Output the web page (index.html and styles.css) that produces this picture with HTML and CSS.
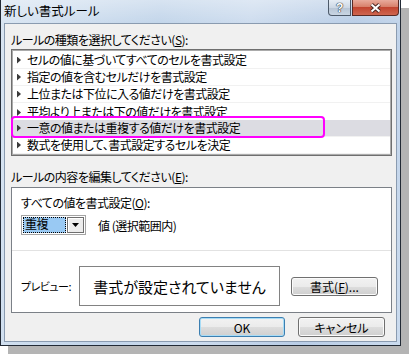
FILE: index.html
```html
<!DOCTYPE html>
<html lang="ja">

<head>
    <meta charset="UTF-8" />
    <title>新しい書式ルール</title>
    <link rel="stylesheet" href="styles.css">
</head>

<body>
    <div class="screen">
        <div class="window">
            <div class="titlebar">
                <span class="title">新しい書式ルール</span>
                <div class="caption-buttons">
                    <div class="cap-btn help">?</div>
                    <div class="cap-btn close">
                        <svg width="13" height="10" viewBox="0 0 13 10">
                            <path d="M2.5 1.5 L10.5 8.5 M10.5 1.5 L2.5 8.5" stroke="#4a2622" stroke-width="4" />
                            <path d="M2.5 1.5 L10.5 8.5 M10.5 1.5 L2.5 8.5" stroke="#fff" stroke-width="2" />
                        </svg>
                    </div>
                </div>
            </div>

            <div class="client">
                <div class="group-label">ルールの種類を選択してください(<u>S</u>):</div>
                <div class="rule-list">
                    <div class="rule">セルの値に基づいてすべてのセルを書式設定</div>
                    <div class="rule">指定の値を含むセルだけを書式設定</div>
                    <div class="rule">上位または下位に入る値だけを書式設定</div>
                    <div class="rule clipped">平均より上または下の値だけを書式設定</div>
                    <div class="rule selected">一意の値または重複する値だけを書式設定</div>
                    <div class="rule">数式を使用して、書式設定するセルを決定</div>
                    <div class="marker"></div>
                </div>

                <div class="group-label second">ルールの内容を編集してください(<u>E</u>):</div>
                <div class="edit-panel">
                    <div class="field-label">すべての値を書式設定(<u>O</u>):</div>
                    <div class="combo-row">
                        <div class="combo">
                            <span class="combo-value">重複</span>
                            <span class="combo-btn"><span class="combo-arrow"></span></span>
                        </div>
                        <span class="combo-note">値 (選択範囲内)</span>
                    </div>
                    <div class="separator"></div>
                    <div class="preview-row">
                        <span class="preview-label">プレビュー:</span>
                        <div class="preview-box">書式が設定されていません</div>
                        <button class="btn format-btn">書式(<u>F</u>)...</button>
                    </div>
                </div>

                <div class="dialog-buttons">
                    <button class="btn default">OK</button>
                    <button class="btn">キャンセル</button>
                </div>
            </div>
        </div>
    </div>
</body>

</html>
```

FILE: styles.css
```css
* {
    box-sizing: border-box;
}

body {
    margin: 0;
    background: #fff;
    font-family: "Noto Sans CJK JP", sans-serif;
    font-size: 12px;
    color: #000;
    font-feature-settings: "palt";
    letter-spacing: -0.5px;
}

.screen {
    width: 410px;
    height: 356px;
    overflow: hidden;
}

/* window frame */

.window {
    width: 401px;
    height: 346px;
    display: flex;
    flex-direction: column;
    border: 1px solid #222a35;
    border-top: none;
    background:
        linear-gradient(to bottom, rgba(255, 255, 255, 0.35), rgba(255, 255, 255, 0) 24px),
        linear-gradient(100deg, #d9e5f2 0%, #c2d5ea 35%, #cddcee 55%, #b9cde6 78%, #cbdbee 100%);
    box-shadow: 8px 8px 0 #b4b4b4;
}

.titlebar {
    height: 23px;
    display: flex;
    justify-content: space-between;
    align-items: flex-start;
}

.title {
    padding: 2px 0 0 3px;
    font-size: 12.5px;
    line-height: 17px;
    letter-spacing: 0;
}

.caption-buttons {
    display: flex;
    gap: 1px;
    margin-right: 1px;
}

.cap-btn {
    height: 16px;
    display: flex;
    align-items: center;
    justify-content: center;
    border: 1px solid #4d5a6a;
    border-top: none;
}

.help {
    width: 23px;
    border-radius: 0 0 0 4px;
    background: linear-gradient(#e6edf5, #cdd8e5 50%, #b6c4d4 51%, #c9d5e3);
    font-family: "Liberation Sans", sans-serif;
    font-weight: bold;
    font-size: 12px;
    color: #fff;
    text-shadow: 0 0 1px #2c3440, 0 0 1px #2c3440, 0 0 1px #2c3440;
}

.close {
    width: 47px;
    border-radius: 0 0 4px 0;
    border-color: #5a2a24;
    background: linear-gradient(#e9ab9c, #d8806b 45%, #c24530 50%, #cf6650);
}

/* dialog client area */

.client {
    flex: 1;
    margin: 0 3px 3px;
    border: 1px solid #8a9bb0;
    background: #f0f0f0;
    padding: 8px 4px 0 6px;
}

.group-label {
    line-height: 16px;
}

.group-label.second {
    margin-top: 13px;
}

.rule-list {
    position: relative;
    height: 107px;
    margin-top: 1px;
    padding: 2px 1px 1px;
    background: #fff;
    border: 1px solid #6f6f6f;
    box-shadow: inset 0 0 0 1px #ababab;
}

.rule {
    height: 17px;
    display: flex;
    align-items: center;
    padding-left: 4px;
    line-height: 16px;
    border-bottom: 1px solid #f1f1f1;
    white-space: nowrap;
}

.rule::before {
    content: "";
    width: 4px;
    height: 7px;
    margin-right: 6px;
    background: #3a3a3a;
    clip-path: polygon(0 0, 100% 50%, 0 100%);
}

.rule.clipped {
    height: 13px;
    margin-bottom: 4px;
    align-items: flex-start;
    padding-top: 1px;
    overflow: hidden;
    border-bottom: none;
}

.rule.clipped::before {
    margin-top: 5px;
}

.rule.selected {
    background: #dcdce2;
}

.marker {
    position: absolute;
    left: -1px;
    top: 66px;
    width: 314px;
    height: 22px;
    border: 2px solid #f0f;
    border-radius: 4px;
}

/* rule description */

.edit-panel {
    height: 126px;
    margin-top: 2px;
    padding-top: 7px;
    background: #fff;
    border: 1px solid #7b8087;
}

.field-label {
    padding-left: 9px;
    line-height: 16px;
}

.combo-row {
    display: flex;
    align-items: center;
    height: 20px;
    margin-top: 4px;
    padding-left: 9px;
}

.combo {
    display: flex;
    width: 65px;
    height: 20px;
    padding: 1px;
    background: #fff;
    border: 1px solid #a4a4a4;
}

.combo-value {
    flex: 1;
    padding-left: 2px;
    line-height: 14px;
    background: #99c9f3;
    outline: 1px dotted #000;
    outline-offset: -1px;
}

.combo-btn {
    width: 17px;
    margin-left: 1px;
    display: flex;
    align-items: center;
    justify-content: center;
    border: 1px solid #6f6f6f;
    box-shadow: inset 1px 1px 0 #fff;
    background: #ececec;
}

.combo-arrow {
    width: 7px;
    height: 4px;
    background: #000;
    clip-path: polygon(0 0, 100% 0, 50% 100%);
}

.combo-note {
    margin-left: 12px;
}

.separator {
    height: 1px;
    margin-top: 15px;
    background: #e2e2e2;
}

.preview-row {
    display: flex;
    align-items: center;
    height: 40px;
    margin-top: 15px;
    padding-left: 9px;
}

.preview-label {
    width: 58px;
    font-size: 11px;
}

.preview-box {
    width: 201px;
    height: 40px;
    display: flex;
    align-items: center;
    justify-content: center;
    border: 1px solid #828282;
    font-size: 15px;
    letter-spacing: 0;
}

/* buttons */

.btn {
    height: 20px;
    padding: 0;
    font: inherit;
    color: #000;
    border: 1px solid #707070;
    border-radius: 3px;
    background: linear-gradient(#f2f2f2 0%, #ebebeb 50%, #dddddd 51%, #cfcfcf 100%);
    box-shadow: inset 0 0 0 1px #fbfbfb;
}

.btn.default {
    border-color: #3c7fb1;
    box-shadow: inset 0 0 0 1px #a8dcf6;
}

.format-btn {
    width: 87px;
    height: 19px;
    margin-left: 11px;
}

.dialog-buttons {
    display: flex;
    justify-content: flex-end;
    gap: 13px;
    margin-top: 4px;
    padding-right: 7px;
}

.dialog-buttons .btn {
    width: 86px;
}

.dialog-buttons .btn + .btn {
    width: 87px;
}
```
